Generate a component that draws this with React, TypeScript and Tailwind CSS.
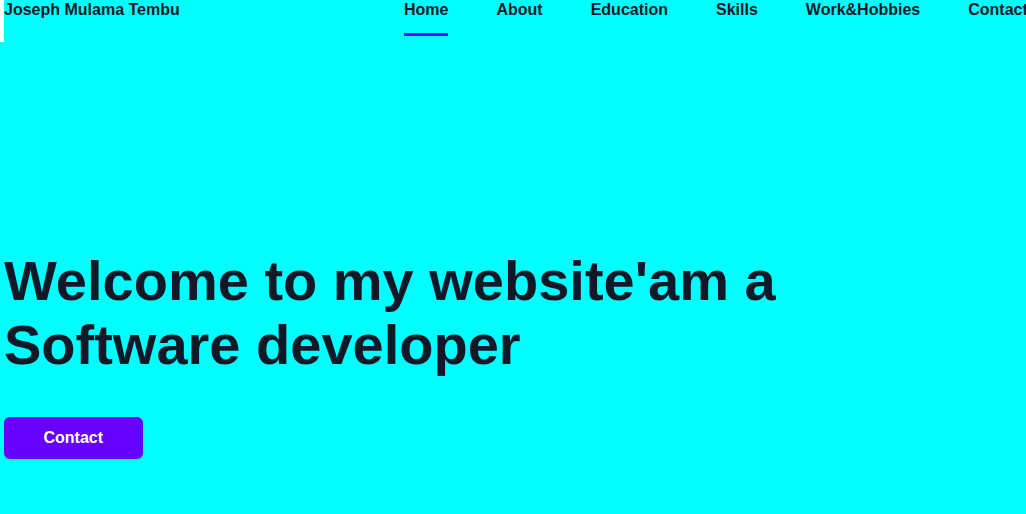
import React from "react";

const links = ["Home", "About", "Education", "Skills", "Work&Hobbies", "Contact"];

export default function App() {
  return (
    <div className="min-h-screen w-full overflow-hidden bg-[#00ffff] font-['Liberation_Sans',Arial,sans-serif] text-[#111827]">
      {/* Header */}
      <header className="flex h-[42px] border-l-[4px] border-white whitespace-nowrap">
        <div className="w-[400px] shrink-0 text-base leading-5 font-bold">
          Joseph Mulama Tembu
        </div>
        <nav className="flex shrink-0 gap-12">
          {links.map((l) => (
            <a key={l} href="#" className="flex flex-col text-base leading-5 font-bold">
              {l}
              {l === "Home" && <span className="mt-[13px] h-[3px] w-full bg-[#6600ff]"></span>}
            </a>
          ))}
        </nav>
      </header>

      {/* Hero */}
      <section className="pl-1 pt-[207px]">
        <h1 className="max-w-[800px] text-[56px] leading-[64px] font-bold">
          Welcome to my website'am a Software developer
        </h1>
        <button className="mt-[40px] flex h-[42px] items-center rounded-md bg-[#6600ff] px-[39.5px] text-base font-bold text-white">
          Contact
        </button>
      </section>
    </div>
  );
}
